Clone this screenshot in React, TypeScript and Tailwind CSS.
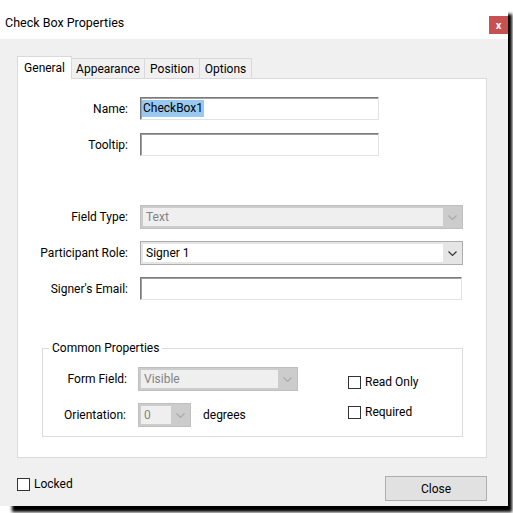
import { ReactNode } from "react";

function Chevron({ color }: { color: string }) {
  return (
    <svg width="9" height="5" viewBox="0 0 9 5" fill="none">
      <polyline points="0.5,0.5 4.5,4.5 8.5,0.5" stroke={color} strokeWidth="1.1" />
    </svg>
  );
}

function TextBox({ w, children }: { w: string; children?: ReactNode }) {
  return (
    <div
      className={`${w} flex h-[23px] items-center border border-[#e3e3e3] border-t-[#7a7a7a] border-l-[#7a7a7a] bg-white pl-px shadow-[inset_1px_1px_0_#a0a0a0]`}
    >
      {children}
    </div>
  );
}

function Combo({ w, value, disabled }: { w: string; value: string; disabled?: boolean }) {
  return (
    <div
      className={`${w} flex h-[24px] border p-[2px] pr-0 ${
        disabled ? "border-[#bfbfbf] bg-[#cccccc]" : "border-[#adadad] bg-[#e5e5e5]"
      }`}
    >
      <div
        className={`flex flex-1 items-center pl-[3px] ${
          disabled ? "bg-[#efefef] text-[#838383]" : "bg-white text-black"
        }`}
      >
        {value}
      </div>
      <div className="flex w-[19px] items-center justify-center">
        <Chevron color={disabled ? "#a9a9a9" : "#333333"} />
      </div>
    </div>
  );
}

function Check({ label }: { label: string }) {
  return (
    <div className="flex items-center gap-[4px]">
      <span className="h-[13px] w-[13px] border border-[#333333] bg-white" />
      <span>{label}</span>
    </div>
  );
}

function Row({ label, children, mt }: { label: string; children: ReactNode; mt: string }) {
  return (
    <div className={`${mt} flex items-center gap-[12px]`}>
      <div className="w-[110px] text-right">{label}</div>
      {children}
    </div>
  );
}

export default function App() {
  const tabs = [
    { name: "Appearance", w: "w-[74px]" },
    { name: "Position", w: "w-[56px]" },
    { name: "Options", w: "w-[53px]" },
  ];

  return (
    <div className="min-h-screen bg-white font-['Roboto','Liberation_Sans',sans-serif] text-[12px] leading-[16px] text-black">
      <div className="flex h-[506px] w-[508px] flex-col bg-[#f0f0f0] shadow-[8px_10px_3px_-4px_#000]">
        {/* title bar */}
        <div className="flex h-[39px] items-start justify-between bg-white">
          <div className="pl-[5px] pt-[15px] text-[12.5px]">Check Box Properties</div>
          <button className="mt-[16px] flex h-[18px] w-[19px] items-center justify-center bg-[#c75050] text-[11px] font-bold leading-none text-white">
            x
          </button>
        </div>

        <div className="flex flex-1 flex-col px-[17px] pt-[17px]">
          {/* tabs */}
          <div className="flex h-[22px] items-end">
            <div className="relative z-10 mb-[-1px] flex h-[23px] w-[55px] items-start justify-center border border-b-0 border-[#d9d9d9] bg-white pt-[3px]">
              General
            </div>
            {tabs.map((t) => (
              <div
                key={t.name}
                className={`${t.w} -ml-px flex h-[20px] items-center justify-center border border-b-0 border-[#d9d9d9] bg-[#f0f0f0] pt-px`}
              >
                {t.name}
              </div>
            ))}
          </div>

          {/* panel */}
          <div className="flex h-[380px] w-[470px] flex-col border border-[#d9d9d9] bg-white">
            <Row label="Name:" mt="mt-[18px]">
              <TextBox w="w-[239px]">
                <span className="bg-[#99c9ef] px-px leading-[17px]">CheckBox1</span>
              </TextBox>
            </Row>
            <Row label="Tooltip:" mt="mt-[13px]">
              <TextBox w="w-[239px]" />
            </Row>
            <Row label="Field Type:" mt="mt-[49px]">
              <Combo w="w-[323px]" value="Text" disabled />
            </Row>
            <Row label="Participant Role:" mt="mt-[12px]">
              <Combo w="w-[323px]" value="Signer 1" />
            </Row>
            <Row label="Signer's Email:" mt="mt-[12px]">
              <TextBox w="w-[322px]" />
            </Row>

            <fieldset className="ml-[24px] mt-[40px] h-[97px] w-[421px] border border-[#dcdcdc] px-0 pb-0">
              <legend className="ml-[6px] px-[3px] leading-[16px]">Common Properties</legend>
              <div className="flex">
                <div className="flex w-[305px] flex-col">
                  <div className="mt-[11px] flex items-center gap-[11px]">
                    <div className="w-[84px] text-right">Form Field:</div>
                    <Combo w="w-[160px]" value="Visible" disabled />
                  </div>
                  <div className="mt-[12px] flex items-center gap-[11px]">
                    <div className="w-[83px] text-right">Orientation:</div>
                    <div className="ml-px">
                      <Combo w="w-[53px]" value="0" disabled />
                    </div>
                    <span className="ml-px">degrees</span>
                  </div>
                </div>
                <div className="flex flex-col">
                  <div className="mt-[18px]">
                    <Check label="Read Only" />
                  </div>
                  <div className="mt-[14px]">
                    <Check label="Required" />
                  </div>
                </div>
              </div>
            </fieldset>
          </div>

          {/* footer */}
          <div className="mt-[18px] flex w-[470px] items-start justify-between">
            <Check label="Locked" />
            <button className="h-[25px] w-[102px] border border-[#adadad] bg-[#e1e1e1] text-[12px]">
              Close
            </button>
          </div>
        </div>
      </div>
    </div>
  );
}
